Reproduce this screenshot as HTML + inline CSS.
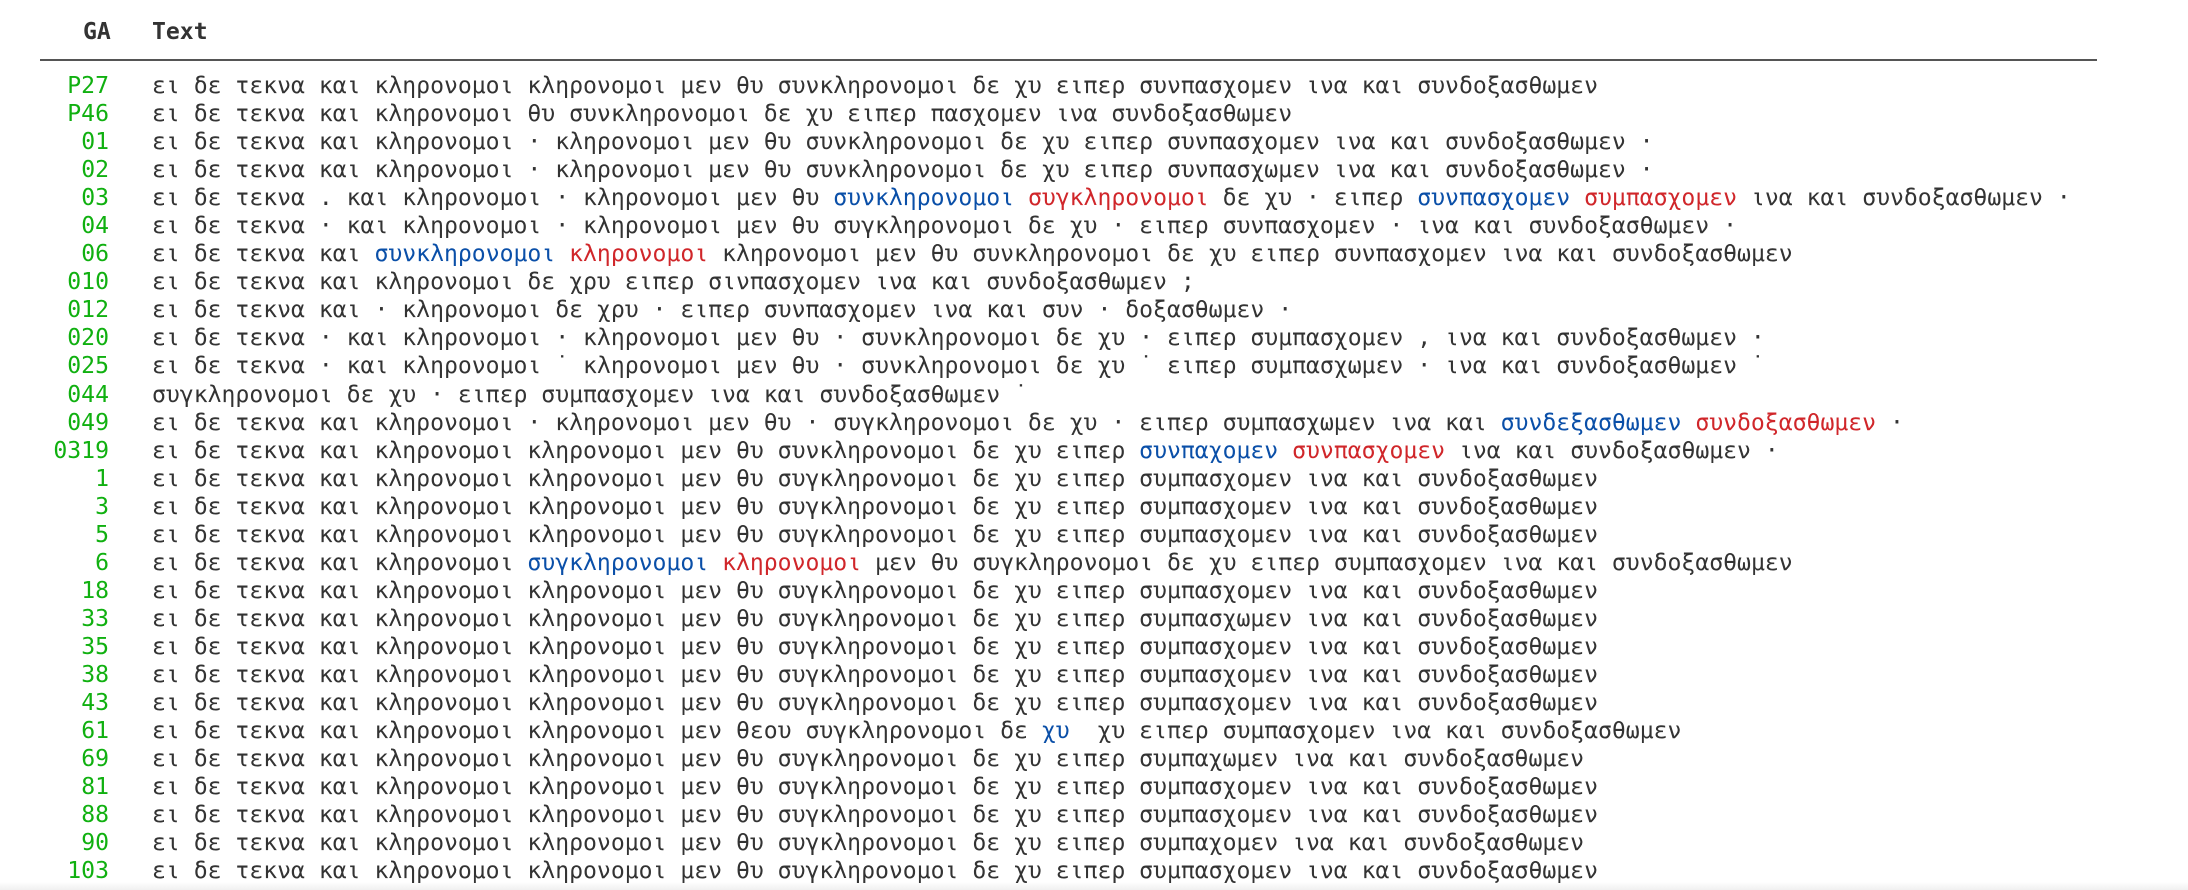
<!DOCTYPE html>
<html><head><meta charset="utf-8"><style>
body{margin:0;width:2188px;height:890px;background:#fff;overflow:hidden;position:relative;font-family:"DejaVu Sans Mono","Liberation Mono",monospace;font-size:23.1px;color:#333}
.h{position:absolute;top:16px;font-weight:bold;line-height:32px}
.line{position:absolute;left:40px;width:2057px;top:59px;height:2px;background:#555}
.rows{position:absolute;top:72px;left:0;z-index:2}
.r{height:28.05px;line-height:28.05px;white-space:pre;position:relative}
.g{position:absolute;left:0;width:109px;text-align:right;color:#10b010}
.t{position:absolute;left:152px}
.b{color:#0a4fa8}.d{color:#d0262a}
.sh{position:absolute;left:0;right:0;bottom:0;height:8px;background:linear-gradient(#fff,#f0f0f0);z-index:1}
</style></head><body>
<div class="h" style="left:83px">GA</div><div class="h" style="left:152px">Text</div>
<div class="line"></div>
<div class="rows">
<div class="r"><span class="g">P27</span><span class="t">ει δε τεκνα και κληρονομοι κληρονομοι μεν θυ συνκληρονομοι δε χυ ειπερ συνπασχομεν ινα και συνδοξασθωμεν</span></div>
<div class="r"><span class="g">P46</span><span class="t">ει δε τεκνα και κληρονομοι θυ συνκληρονομοι δε χυ ειπερ πασχομεν ινα συνδοξασθωμεν</span></div>
<div class="r"><span class="g">01</span><span class="t">ει δε τεκνα και κληρονομοι · κληρονομοι μεν θυ συνκληρονομοι δε χυ ειπερ συνπασχομεν ινα και συνδοξασθωμεν ·</span></div>
<div class="r"><span class="g">02</span><span class="t">ει δε τεκνα και κληρονομοι · κληρονομοι μεν θυ συνκληρονομοι δε χυ ειπερ συνπασχωμεν ινα και συνδοξασθωμεν ·</span></div>
<div class="r"><span class="g">03</span><span class="t">ει δε τεκνα . και κληρονομοι · κληρονομοι μεν θυ <span class="b">συνκληρονομοι</span> <span class="d">συγκληρονομοι</span> δε χυ · ειπερ <span class="b">συνπασχομεν</span> <span class="d">συμπασχομεν</span> ινα και συνδοξασθωμεν ·</span></div>
<div class="r"><span class="g">04</span><span class="t">ει δε τεκνα · και κληρονομοι · κληρονομοι μεν θυ συγκληρονομοι δε χυ · ειπερ συνπασχομεν · ινα και συνδοξασθωμεν ·</span></div>
<div class="r"><span class="g">06</span><span class="t">ει δε τεκνα και <span class="b">συνκληρονομοι</span> <span class="d">κληρονομοι</span> κληρονομοι μεν θυ συνκληρονομοι δε χυ ειπερ συνπασχομεν ινα και συνδοξασθωμεν</span></div>
<div class="r"><span class="g">010</span><span class="t">ει δε τεκνα και κληρονομοι δε χρυ ειπερ σινπασχομεν ινα και συνδοξασθωμεν ;</span></div>
<div class="r"><span class="g">012</span><span class="t">ει δε τεκνα και · κληρονομοι δε χρυ · ειπερ συνπασχομεν ινα και συν · δοξασθωμεν ·</span></div>
<div class="r"><span class="g">020</span><span class="t">ει δε τεκνα · και κληρονομοι · κληρονομοι μεν θυ · συνκληρονομοι δε χυ · ειπερ συμπασχομεν , ινα και συνδοξασθωμεν ·</span></div>
<div class="r"><span class="g">025</span><span class="t">ει δε τεκνα · και κληρονομοι ˙ κληρονομοι μεν θυ · συνκληρονομοι δε χυ ˙ ειπερ συμπασχωμεν · ινα και συνδοξασθωμεν ˙</span></div>
<div class="r"><span class="g">044</span><span class="t">συγκληρονομοι δε χυ · ειπερ συμπασχομεν ινα και συνδοξασθωμεν ˙</span></div>
<div class="r"><span class="g">049</span><span class="t">ει δε τεκνα και κληρονομοι · κληρονομοι μεν θυ · συγκληρονομοι δε χυ · ειπερ συμπασχωμεν ινα και <span class="b">συνδεξασθωμεν</span> <span class="d">συνδοξασθωμεν</span> ·</span></div>
<div class="r"><span class="g">0319</span><span class="t">ει δε τεκνα και κληρονομοι κληρονομοι μεν θυ συνκληρονομοι δε χυ ειπερ <span class="b">συνπαχομεν</span> <span class="d">συνπασχομεν</span> ινα και συνδοξασθωμεν ·</span></div>
<div class="r"><span class="g">1</span><span class="t">ει δε τεκνα και κληρονομοι κληρονομοι μεν θυ συγκληρονομοι δε χυ ειπερ συμπασχομεν ινα και συνδοξασθωμεν</span></div>
<div class="r"><span class="g">3</span><span class="t">ει δε τεκνα και κληρονομοι κληρονομοι μεν θυ συγκληρονομοι δε χυ ειπερ συμπασχομεν ινα και συνδοξασθωμεν</span></div>
<div class="r"><span class="g">5</span><span class="t">ει δε τεκνα και κληρονομοι κληρονομοι μεν θυ συγκληρονομοι δε χυ ειπερ συμπασχομεν ινα και συνδοξασθωμεν</span></div>
<div class="r"><span class="g">6</span><span class="t">ει δε τεκνα και κληρονομοι <span class="b">συγκληρονομοι</span> <span class="d">κληρονομοι</span> μεν θυ συγκληρονομοι δε χυ ειπερ συμπασχομεν ινα και συνδοξασθωμεν</span></div>
<div class="r"><span class="g">18</span><span class="t">ει δε τεκνα και κληρονομοι κληρονομοι μεν θυ συγκληρονομοι δε χυ ειπερ συμπασχομεν ινα και συνδοξασθωμεν</span></div>
<div class="r"><span class="g">33</span><span class="t">ει δε τεκνα και κληρονομοι κληρονομοι μεν θυ συγκληρονομοι δε χυ ειπερ συμπασχωμεν ινα και συνδοξασθωμεν</span></div>
<div class="r"><span class="g">35</span><span class="t">ει δε τεκνα και κληρονομοι κληρονομοι μεν θυ συγκληρονομοι δε χυ ειπερ συμπασχομεν ινα και συνδοξασθωμεν</span></div>
<div class="r"><span class="g">38</span><span class="t">ει δε τεκνα και κληρονομοι κληρονομοι μεν θυ συγκληρονομοι δε χυ ειπερ συμπασχομεν ινα και συνδοξασθωμεν</span></div>
<div class="r"><span class="g">43</span><span class="t">ει δε τεκνα και κληρονομοι κληρονομοι μεν θυ συγκληρονομοι δε χυ ειπερ συμπασχομεν ινα και συνδοξασθωμεν</span></div>
<div class="r"><span class="g">61</span><span class="t">ει δε τεκνα και κληρονομοι κληρονομοι μεν θεου συγκληρονομοι δε <span class="b">χυ</span>  χυ ειπερ συμπασχομεν ινα και συνδοξασθωμεν</span></div>
<div class="r"><span class="g">69</span><span class="t">ει δε τεκνα και κληρονομοι κληρονομοι μεν θυ συγκληρονομοι δε χυ ειπερ συμπαχωμεν ινα και συνδοξασθωμεν</span></div>
<div class="r"><span class="g">81</span><span class="t">ει δε τεκνα και κληρονομοι κληρονομοι μεν θυ συγκληρονομοι δε χυ ειπερ συμπασχομεν ινα και συνδοξασθωμεν</span></div>
<div class="r"><span class="g">88</span><span class="t">ει δε τεκνα και κληρονομοι κληρονομοι μεν θυ συγκληρονομοι δε χυ ειπερ συμπασχομεν ινα και συνδοξασθωμεν</span></div>
<div class="r"><span class="g">90</span><span class="t">ει δε τεκνα και κληρονομοι κληρονομοι μεν θυ συγκληρονομοι δε χυ ειπερ συμπαχομεν ινα και συνδοξασθωμεν</span></div>
<div class="r"><span class="g">103</span><span class="t">ει δε τεκνα και κληρονομοι κληρονομοι μεν θυ συγκληρονομοι δε χυ ειπερ συμπασχομεν ινα και συνδοξασθωμεν</span></div>
</div>
<div class="sh"></div>
</body></html>
